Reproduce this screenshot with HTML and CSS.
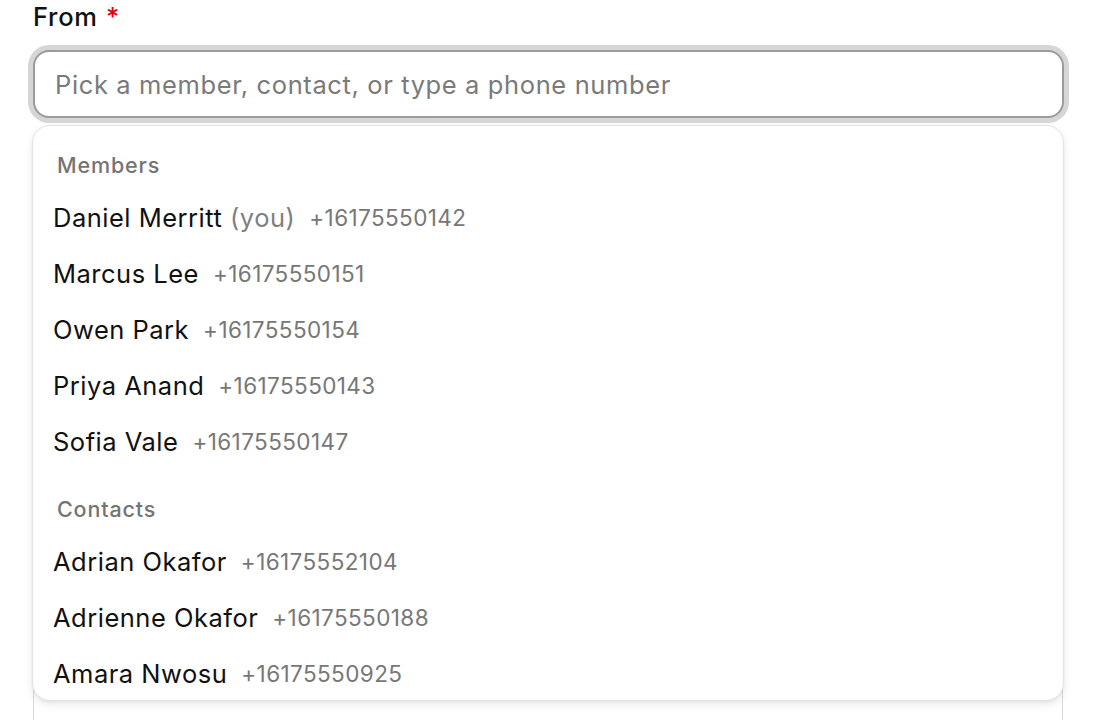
FILE: index.html
```html
<!DOCTYPE html>
<html lang="en">
<head>
<meta charset="utf-8">
<title>From picker</title>
<link rel="stylesheet" href="styles.css">
</head>
<body>
<div class="form">
  <div class="field">
    <label class="label" for="from">From <span class="req">*</span></label>
    <div class="combo">
      <input id="from" class="input" type="text" placeholder="Pick a member, contact, or type a phone number">
      <div class="popover">
        <div class="group">
          <div class="group-title">Members</div>
          <div class="option"><span class="name">Daniel Merritt <span class="you">(you)</span></span><span class="phone">+16175550142</span></div>
          <div class="option"><span class="name">Marcus Lee</span><span class="phone">+16175550151</span></div>
          <div class="option"><span class="name">Owen Park</span><span class="phone">+16175550154</span></div>
          <div class="option"><span class="name">Priya Anand</span><span class="phone">+16175550143</span></div>
          <div class="option"><span class="name">Sofia Vale</span><span class="phone">+16175550147</span></div>
        </div>
        <div class="group group-next">
          <div class="group-title">Contacts</div>
          <div class="option"><span class="name">Adrian Okafor</span><span class="phone">+16175552104</span></div>
          <div class="option"><span class="name">Adrienne Okafor</span><span class="phone">+16175550188</span></div>
          <div class="option"><span class="name">Amara Nwosu</span><span class="phone">+16175550925</span></div>
        </div>
      </div>
    </div>
  </div>
  <div class="field next-field">
    <div class="textarea"></div>
  </div>
</div>
</body>
</html>
```

FILE: styles.css
```css
* { box-sizing: border-box; }
html, body { margin: 0; padding: 0; background: #fff; }
html { height: 720px; overflow: hidden; }
body {
  font-family: Inter, "Noto Sans", "Liberation Sans", sans-serif;
  color: #111;
}
.form {
  padding: 0 32px 0 33px;
}
.field { display: flex; flex-direction: column; }
.label {
  font-size: 25.5px;
  font-weight: 500;
  letter-spacing: 0.7px;
  line-height: 34px;
  color: #111;
  margin-bottom: 16px;
}
.req { color: #e5000b; margin-left: 1px; }
.combo { position: relative; }
.input {
  width: 100%;
  height: 68px;
  border: 2px solid #9b9b9b;
  border-radius: 16px;
  box-shadow: 0 0 0 5px #d6d6d6;
  padding: 0 20px;
  font-family: inherit;
  font-size: 25.5px;
  letter-spacing: 0.62px;
  color: #111;
  outline: none;
  background: #fff;
}
.input::placeholder { color: #7a7a7a; }
.popover {
  position: absolute;
  top: 75px;
  left: -1px;
  right: 0;
  height: 576px;
  overflow: hidden;
  background: #fff;
  border: 1px solid #e3e3e3;
  border-radius: 18px;
  box-shadow: 0 4px 10px rgba(0,0,0,0.08), 0 1px 3px rgba(0,0,0,0.06);
  padding: 8px 0;
  z-index: 10;
}
.group-title {
  padding: 14px 24px 7px;
  line-height: 34px;
  font-size: 21.5px;
  font-weight: 500;
  letter-spacing: 0.85px;
  color: #747474;
}
.group-next { margin-top: 9px; }
.option {
  height: 56px;
  display: flex;
  align-items: center;
  gap: 14px;
  padding: 0 20px;
}
.name { font-size: 25.5px; letter-spacing: 0.5px; color: #111; white-space: nowrap; }
.you { color: #7f7f7f; }
.phone { font-size: 22.5px; letter-spacing: 0.4px; color: #777; white-space: nowrap; }
.next-field { margin-top: 30px; }
.textarea {
  height: 572px;
  border: 1px solid #dadada;
  border-bottom: none;
  border-radius: 16px 16px 0 0;
  margin-right: 1px;
}
```
